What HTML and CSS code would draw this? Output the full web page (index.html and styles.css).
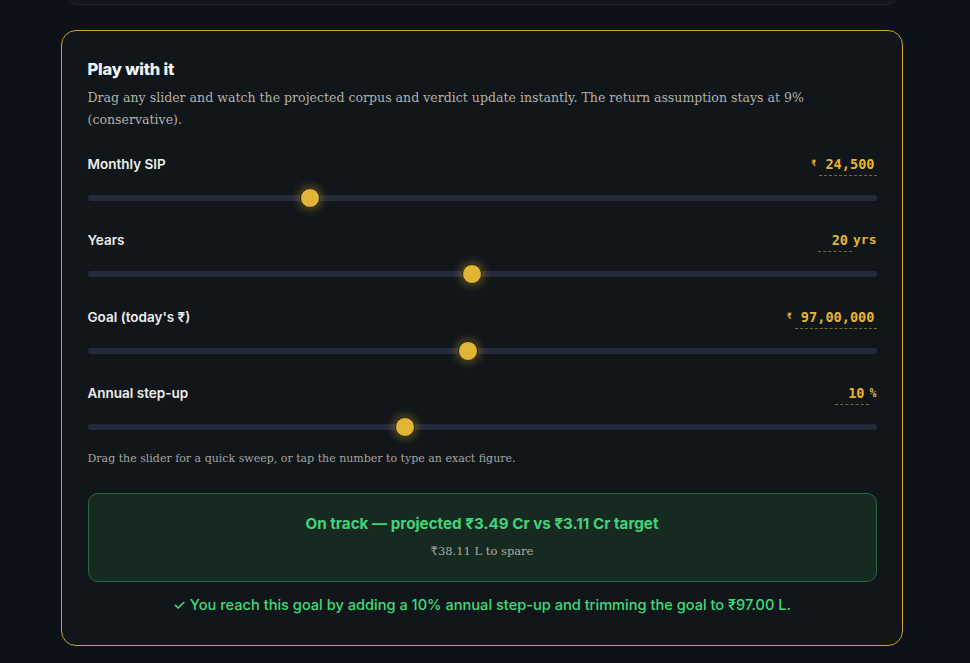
FILE: index.html
```html
<!DOCTYPE html>
<html lang="en">
<head>
<meta charset="utf-8">
<title>Play with it</title>
<link rel="stylesheet" href="styles.css">
</head>
<body>
<div class="page">
  <div class="prev-card"></div>
  <section class="play-card">
    <h2 class="title">Play with it</h2>
    <p class="desc">Drag any slider and watch the projected corpus and verdict update instantly. The return assumption stays at 9% (conservative).</p>

    <div class="sliders">
      <div class="row">
        <div class="row-head">
          <span class="label">Monthly SIP</span>
          <span class="value"><span class="prefix">₹</span><span class="num">24,500</span></span>
        </div>
        <input class="range" type="range" min="0" max="1000" value="276">
      </div>
      <div class="row">
        <div class="row-head">
          <span class="label">Years</span>
          <span class="value"><span class="num short">20</span><span class="suffix">yrs</span></span>
        </div>
        <input class="range" type="range" min="0" max="1000" value="487">
      </div>
      <div class="row">
        <div class="row-head">
          <span class="label">Goal (today's ₹)</span>
          <span class="value"><span class="prefix">₹</span><span class="num">97,00,000</span></span>
        </div>
        <input class="range" type="range" min="0" max="1000" value="482">
      </div>
      <div class="row">
        <div class="row-head">
          <span class="label">Annual step-up</span>
          <span class="value"><span class="num short">10</span><span class="suffix pct">%</span></span>
        </div>
        <input class="range" type="range" min="0" max="1000" value="400">
      </div>
    </div>

    <p class="hint">Drag the slider for a quick sweep, or tap the number to type an exact figure.</p>

    <div class="verdict">
      <div class="verdict-title">On track — projected ₹3.49 Cr vs ₹3.11 Cr target</div>
      <div class="verdict-sub">₹38.11 L to spare</div>
    </div>

    <p class="reach">✓ You reach this goal by adding a 10% annual step-up and trimming the goal to ₹97.00 L.</p>
  </section>
</div>
</body>
</html>
```

FILE: styles.css
```css
* { box-sizing: border-box; }

html, body {
  margin: 0;
  padding: 0;
  background: #0d1118;
  height: 100%;
  overflow: hidden;
}

.page {
  width: 842px;
  margin-left: 61px;
  display: flex;
  flex-direction: column;
  gap: 25px;
}

.prev-card {
  margin: -30px 3px 0 3px;
  height: 35px;
  background: #131820;
  border: 1px solid #232834;
  border-radius: 14px;
}

.play-card {
  background: #10161a;
  border: 1.5px solid #d0a22a;
  border-radius: 15px;
  padding: 28px 25.5px 30px 25.5px;
  display: flex;
  flex-direction: column;
}

.title {
  margin: 0;
  font-family: "Inter", "Open Sans", sans-serif;
  font-weight: 800;
  font-size: 16.5px;
  line-height: 20px;
  letter-spacing: -0.2px;
  color: #f4f4f2;
}

.desc {
  margin: 8px 0 0 0;
  font-family: "DejaVu Serif", serif;
  font-size: 12.55px;
  line-height: 22px;
  color: #b3b2aa;
}

.sliders {
  margin-top: 23px;
  display: flex;
  flex-direction: column;
  gap: 22.4px;
}

.row {
  display: flex;
  flex-direction: column;
  gap: 14px;
}

.row-head {
  display: flex;
  justify-content: space-between;
  align-items: flex-start;
  height: 20px;
}

.label {
  font-family: "Inter", "Open Sans", sans-serif;
  font-weight: 600;
  font-size: 13.5px;
  line-height: 20px;
  color: #eeeeec;
}

.value {
  display: flex;
  align-items: flex-start;
  font-family: "DejaVu Sans Mono", "Liberation Mono", monospace;
  font-weight: bold;
  font-size: 13.6px;
  line-height: 20px;
  color: #e6b52f;
}

.prefix {
  font-size: 8.5px;
  line-height: 18px;
  margin-right: 3px;
}

.num {
  display: inline-block;
  text-align: right;
  padding: 0 2px 0 6px;
  height: 22px;
  border-bottom: 1px dashed rgba(214, 176, 60, 0.55);
}

.num.short {
  min-width: 34px;
  padding-right: 4px;
}

.suffix {
  font-size: 13px;
  padding-left: 1px;
}

.suffix.pct {
  font-size: 11.5px;
}

.range {
  -webkit-appearance: none;
  appearance: none;
  width: 100%;
  height: 20px;
  margin: 0;
  padding: 0;
  background: transparent;
  display: block;
}

.range::-webkit-slider-runnable-track {
  height: 6px;
  background: #252a3b;
  border-radius: 3px;
}

.range::-webkit-slider-thumb {
  -webkit-appearance: none;
  appearance: none;
  width: 20px;
  height: 20px;
  margin-top: -7px;
  border-radius: 50%;
  background: #e0b535;
  border: 1.5px solid #2a2410;
  box-shadow: 0 0 8px 2px rgba(224, 181, 53, 0.35);
}

.hint {
  margin: 12px 0 0 0;
  font-family: "DejaVu Serif", serif;
  font-size: 11px;
  line-height: 20px;
  color: #a6a59e;
}

.verdict {
  margin-top: 24px;
  background: #172a21;
  border: 1px solid #2a6746;
  border-radius: 10px;
  padding: 19px 20px 20px 20px;
  display: flex;
  flex-direction: column;
  align-items: center;
  gap: 6px;
}

.verdict-title {
  font-family: "Inter", "Open Sans", sans-serif;
  font-weight: 700;
  font-size: 15.2px;
  line-height: 22px;
  color: #3fd47b;
}

.verdict-sub {
  font-family: "DejaVu Serif", serif;
  font-size: 11.5px;
  line-height: 20px;
  color: #a9aaa3;
}

.reach {
  margin: 13px 0 0 0;
  text-align: center;
  font-family: "Inter", "Open Sans", sans-serif;
  font-weight: 500;
  font-size: 14.6px;
  line-height: 20px;
  color: #3ddc7a;
}
```
